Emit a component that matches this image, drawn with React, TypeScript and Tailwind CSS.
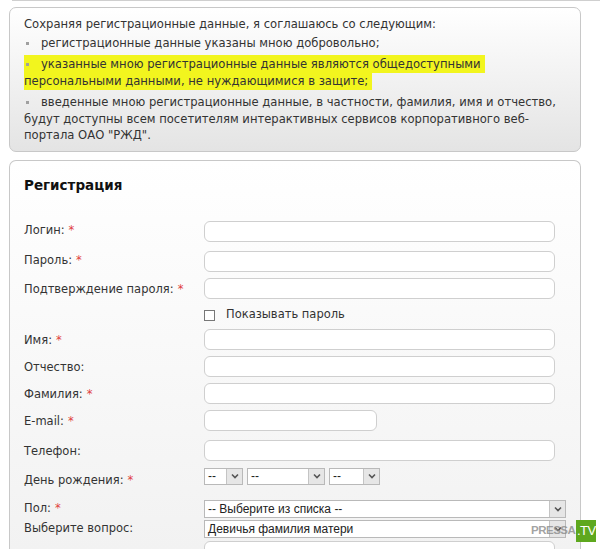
import React from 'react';

const verdana = { fontFamily: '"DejaVu Sans", Verdana, sans-serif' };

function Req() {
  return <span className="text-[#e04040] ml-1">*</span>;
}

function Bullet() {
  return <span className="inline-block w-[3px] h-[3px] bg-[#a0a0a0] ml-[2px] mr-[12px] align-middle" />;
}

function Field({ width = 'w-[351px]' }: { width?: string }) {
  return <div className={`${width} h-[21px] rounded-[6px] border border-[#cfcfcf] bg-white`} />;
}

function Select({ width, text }: { width: string; text: string }) {
  return (
    <div className={`${width} h-full flex border border-[#b9b9b9] bg-white`}>
      <div className="flex-1 flex items-center pl-[3px] text-[12px] text-[#222] overflow-hidden whitespace-nowrap font-['Liberation_Sans',Arial,sans-serif]">
        {text}
      </div>
      <div className="w-[16px] h-full flex items-center justify-center bg-[#e6e6e6] border-l border-[#c4c4c4]">
        <svg width="8" height="6" viewBox="0 0 8 6">
          <path d="M1 1.5 L4 4.5 L7 1.5" fill="none" stroke="#555" strokeWidth="1.6" />
        </svg>
      </div>
    </div>
  );
}

function Row({
  label,
  req,
  mt,
  h = 'h-[21px]',
  labelPad = '',
  children,
}: {
  label: string;
  req?: boolean;
  mt: string;
  h?: string;
  labelPad?: string;
  children: React.ReactNode;
}) {
  return (
    <div className={`flex ${h} ${mt}`}>
      <div className={`w-[180px] flex items-center text-[11.5px] text-[#333] whitespace-nowrap ${labelPad}`}>
        {label}
        {req && <Req />}
      </div>
      <div className="flex items-center gap-[4px] h-full">{children}</div>
    </div>
  );
}

export default function App() {
  return (
    <div className="w-[600px] h-[549px] overflow-hidden bg-white relative" style={verdana}>
      <div className="ml-[12px] h-[1px] bg-[#cfcfcf]" />

      {/* agreement box */}
      <div className="mt-[6px] ml-[9px] w-[572px] rounded-[7px] border border-[#c8c8c8] bg-gradient-to-b from-white to-[#e4e4e4] pl-[14px] pr-[6px] pt-[8px] pb-[7px] text-[11.6px] leading-[16.5px] text-[#333] whitespace-nowrap">
        <p>Сохраняя регистрационные данные, я соглашаюсь со следующим:</p>
        <p className="mt-[2px]">
          <Bullet />регистрационные данные указаны мною добровольно;
        </p>
        <p className="mt-[5px]">
          <span className="bg-[#f2f51e] [box-decoration-break:clone] py-[2px] pr-[4px]">
            <Bullet />указанные мною регистрационные данные являются общедоступными
            <br />
            персональными данными, не нуждающимися в защите;
          </span>
        </p>
        <p className="mt-[5px]">
          <Bullet />введенные мною регистрационные данные, в частности, фамилия, имя и отчество,
          <br />
          будут доступны всем посетителям интерактивных сервисов корпоративного веб-
          <br />
          портала ОАО "РЖД".
        </p>
      </div>

      {/* registration box */}
      <div className="mt-[8px] ml-[9px] w-[572px] h-[420px] rounded-t-[7px] border border-[#c8c8c8] border-b-0 bg-gradient-to-b from-white to-[#f1f1f1] pl-[14px] pt-[16px]">
        <div className="h-[17px] text-[13.5px] font-bold text-[#111] leading-[17px]">Регистрация</div>

        <Row label="Логин:" req mt="mt-[27px]">
          <Field />
        </Row>
        <Row label="Пароль:" req mt="mt-[9px]">
          <Field />
        </Row>
        <Row label="Подтверждение пароля:" req mt="mt-[6px]" labelPad="pt-[4px]">
          <Field />
        </Row>
        <div className="flex h-[19px] mt-[7px]">
          <div className="w-[180px]" />
          <div className="flex items-center">
            <div className="w-[11px] h-[11px] border border-[#777] bg-white" />
            <span className="ml-[11px] text-[11.5px] text-[#333]">Показывать пароль</span>
          </div>
        </div>
        <Row label="Имя:" req mt="mt-[4px]" labelPad="pt-[3px]">
          <Field />
        </Row>
        <Row label="Отчество:" mt="mt-[6px]" labelPad="pt-[4px]">
          <Field />
        </Row>
        <Row label="Фамилия:" req mt="mt-[6px]" labelPad="pt-[3px]">
          <Field />
        </Row>
        <Row label="E-mail:" req mt="mt-[6px]" labelPad="pt-[3px]">
          <Field width="w-[173px]" />
        </Row>
        <Row label="Телефон:" mt="mt-[9px]" labelPad="pt-[4px]">
          <Field />
        </Row>
        <Row label="День рождения:" req mt="mt-[7px]" h="h-[17px]" labelPad="pt-[10px]">
          <Select width="w-[39px]" text="--" />
          <Select width="w-[78px]" text="--" />
          <Select width="w-[51px]" text="--" />
        </Row>
        <Row label="Пол:" req mt="mt-[15px]" h="h-[18px]">
          <Select width="w-[362px]" text="-- Выберите из списка --" />
        </Row>
        <Row label="Выберите вопрос:" mt="mt-[2px]" h="h-[18px]">
          <Select width="w-[362px]" text="Девичья фамилия матери" />
        </Row>
        <Row label="" mt="mt-[3px]">
          <Field />
        </Row>
      </div>

      {/* watermark */}
      <div className="absolute left-[531px] top-[520px] h-[22px] flex items-center">
        <span className="text-[11.5px] font-bold text-[#8a8a8a]/80 tracking-[-0.5px] font-['Liberation_Sans',Arial,sans-serif]">
          PRESSA
        </span>
        <span className="ml-[1px] w-[20px] h-[22px] flex items-center justify-center bg-[#5ea81e] text-white text-[13px] tracking-[-0.5px] font-['Liberation_Sans',Arial,sans-serif]">
          .TV
        </span>
      </div>
    </div>
  );
}
